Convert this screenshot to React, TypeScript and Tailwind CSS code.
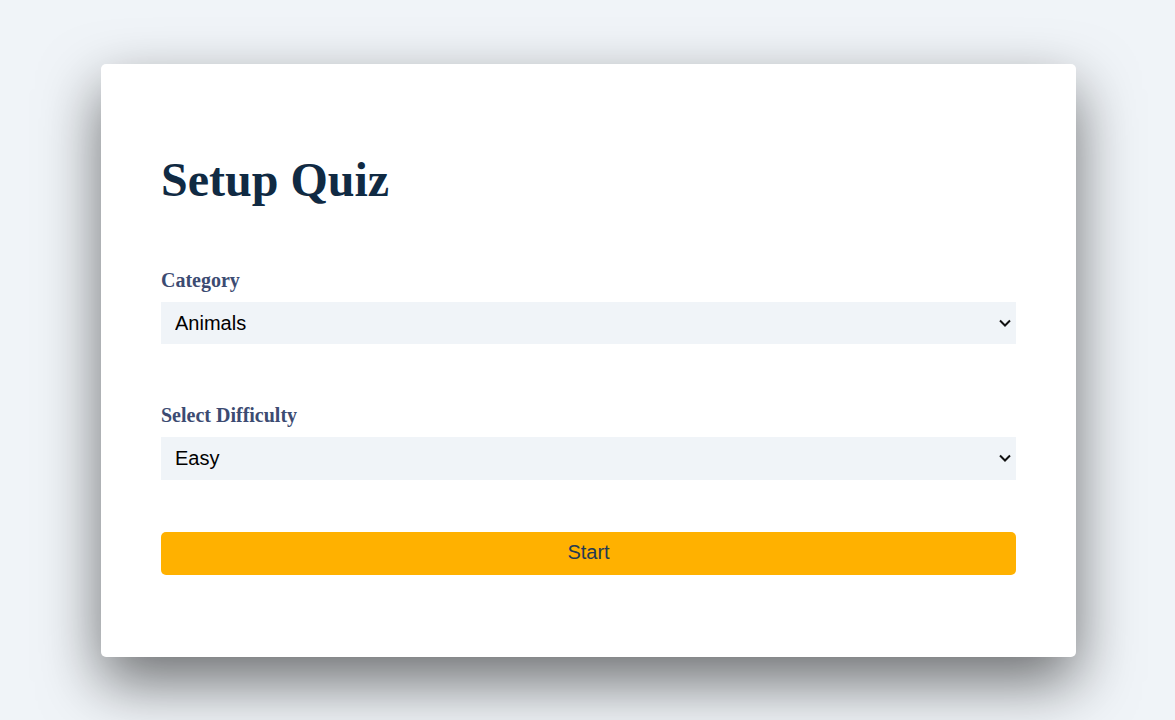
import { useState } from 'react';

function Chevron() {
  return (
    <svg
      className="pointer-events-none absolute right-[5px] top-1/2 -translate-y-1/2"
      width="12"
      height="8"
      viewBox="0 0 12 8"
      fill="none"
    >
      <path d="M1 1.5 6 6.5 11 1.5" stroke="#111" strokeWidth="2" />
    </svg>
  );
}

export default function App() {
  const [category, setCategory] = useState('animals');
  const [difficulty, setDifficulty] = useState('easy');

  return (
    <main className="min-h-screen w-full bg-[#f0f4f8] flex items-center justify-center">
      <section className="ml-[2px] w-[975px] bg-white rounded-[5px] shadow-[0_25px_60px_rgba(0,0,0,0.55)] px-[60px] pt-[89px] pb-[82px]">
        <form className="flex flex-col" onSubmit={(e) => e.preventDefault()}>
          <h2 className="font-['Liberation_Serif',serif] font-bold text-[48px] leading-[53px] text-[#102a43] mb-[63px]">
            Setup Quiz
          </h2>

          {/* category */}
          <label
            htmlFor="category"
            className="font-['Liberation_Serif',serif] font-bold text-[20px] leading-[22px] text-[#3c4b72] mb-[11px]"
          >
            Category
          </label>
          <div className="relative">
            <select
              id="category"
              value={category}
              onChange={(e) => setCategory(e.target.value)}
              className="appearance-none w-full h-[42px] bg-[#f0f4f8] border-0 outline-none pl-[14px] pr-[24px] font-['Liberation_Sans',sans-serif] text-[20px] text-black"
            >
              <option value="animals">Animals</option>
              <option value="history">History</option>
              <option value="sports">Sports</option>
            </select>
            <Chevron />
          </div>

          {/* difficulty */}
          <label
            htmlFor="difficulty"
            className="font-['Liberation_Serif',serif] font-bold text-[20px] leading-[22px] text-[#3c4b72] mt-[60px] mb-[11px]"
          >
            Select Difficulty
          </label>
          <div className="relative">
            <select
              id="difficulty"
              value={difficulty}
              onChange={(e) => setDifficulty(e.target.value)}
              className="appearance-none w-full h-[43px] bg-[#f0f4f8] border-0 outline-none pl-[14px] pr-[24px] font-['Liberation_Sans',sans-serif] text-[20px] text-black"
            >
              <option value="easy">Easy</option>
              <option value="medium">Medium</option>
              <option value="hard">Hard</option>
            </select>
            <Chevron />
          </div>

          <button
            type="submit"
            className="mt-[52px] h-[43px] w-full rounded-[5px] bg-[#ffb100] font-['Liberation_Sans',sans-serif] text-[20px] leading-[23px] text-[#243b53] pb-[2px]"
          >
            Start
          </button>
        </form>
      </section>
    </main>
  );
}
